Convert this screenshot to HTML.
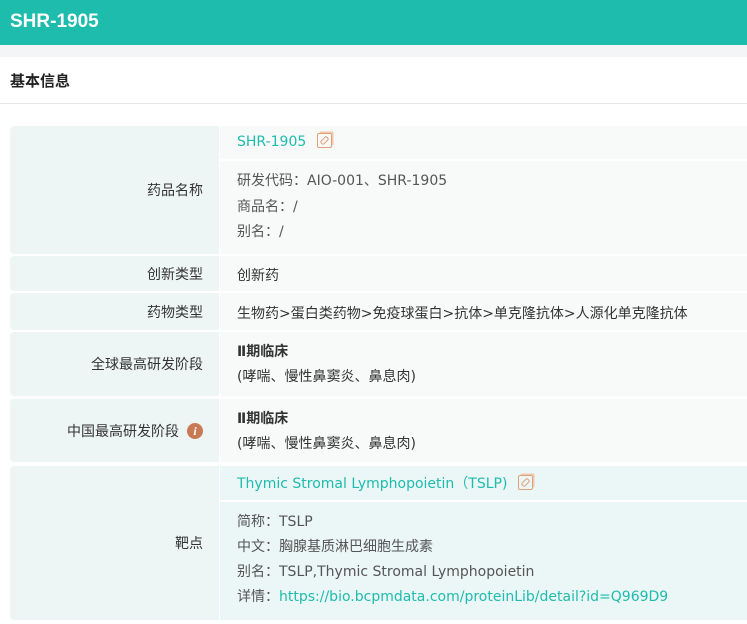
<!DOCTYPE html>
<html><head><meta charset="utf-8"><style>
*{margin:0;padding:0;box-sizing:border-box}
body{width:747px;height:624px;overflow:hidden;background:#fff;font-family:"Liberation Sans","Noto Sans CJK SC",sans-serif;font-size:14px;color:#333;position:relative}
.hdr{position:absolute;left:0;top:0;width:747px;height:45px;background:#1ebcad;color:#fff;font-weight:bold;font-size:19px;line-height:44px;padding-left:10px}
.gap{position:absolute;left:0;top:45px;width:747px;height:12px;background:#f4f5f7}
.ttl{position:absolute;left:10px;top:70px;font-weight:bold;font-size:15px;color:#222}
.line{position:absolute;left:0;top:103px;width:747px;height:1px;background:#e6e6e6}
.b{position:absolute}
.lab{background:#eef6f5;border-radius:4px 0 0 4px;left:10px;width:209px;text-align:right;padding-right:16px;display:flex;align-items:center;justify-content:flex-end;color:#333}
.con{left:220px;width:527px;background:#f8fafa;padding-left:17px}
.t{position:absolute;left:237px;white-space:nowrap;font-family:"DejaVu Sans","Noto Sans CJK SC",sans-serif;font-size:14px}
.lk{color:#1ebcad}
.ic{display:inline-block;width:15px;height:15px;border:1.5px solid #e2a07a;border-radius:2px;vertical-align:-2px;margin-left:11px;position:relative;box-shadow:2px -2px 0 -0.5px #f0c8ae}
.ic:after{content:"";position:absolute;left:2px;top:4px;width:7px;height:3px;border:1.3px solid #e2a07a;border-radius:2px;transform:rotate(-45deg)}
</style></head><body>
<div class="hdr">SHR-1905</div>
<div class="gap"></div>
<div class="ttl">基本信息</div>
<div class="line"></div>

<div class="b lab" style="top:126px;height:128px">药品名称</div>
<div class="b con" style="top:126px;height:33px"></div>
<div class="b con" style="top:161px;height:93px"></div>
<div class="t lk" style="top:133px">SHR-1905<span class="ic"></span></div>
<div class="t" style="top:170px;color:#555">研发代码：AIO-001、SHR-1905</div>
<div class="t" style="top:196px;color:#555">商品名：/</div>
<div class="t" style="top:221px;color:#555">别名：/</div>

<div class="b lab" style="top:256px;height:35px">创新类型</div>
<div class="b con" style="top:256px;height:35px"></div>
<div class="t" style="top:265px">创新药</div>

<div class="b lab" style="top:293px;height:37px">药物类型</div>
<div class="b con" style="top:293px;height:37px"></div>
<div class="t" style="top:303px">生物药&gt;蛋白类药物&gt;免疫球蛋白&gt;抗体&gt;单克隆抗体&gt;人源化单克隆抗体</div>

<div class="b lab" style="top:332px;height:64px">全球最高研发阶段</div>
<div class="b con" style="top:332px;height:64px"></div>
<div class="t" style="top:341px;font-weight:bold">Ⅱ期临床</div>
<div class="t" style="top:366px">(哮喘、慢性鼻窦炎、鼻息肉)</div>

<div class="b lab" style="top:399px;height:63px">中国最高研发阶段<span style="display:inline-block;width:16px;height:16px;border-radius:50%;background:#c97a55;color:#fff;font-size:12px;font-style:italic;font-weight:bold;text-align:center;line-height:16px;margin-left:8px;font-family:'Liberation Serif',serif">i</span></div>
<div class="b con" style="top:399px;height:63px"></div>
<div class="t" style="top:408px;font-weight:bold">Ⅱ期临床</div>
<div class="t" style="top:433px">(哮喘、慢性鼻窦炎、鼻息肉)</div>

<div class="b lab" style="top:466px;height:154px">靶点</div>
<div class="b con" style="top:466px;height:34px;background:#ebf6f6"></div>
<div class="b con" style="top:502px;height:118px;background:#ebf6f6"></div>
<div class="t lk" style="top:473px">Thymic Stromal Lymphopoietin（TSLP)<span class="ic"></span></div>
<div class="t" style="top:511px;color:#555">简称：TSLP</div>
<div class="t" style="top:536px;color:#555">中文：胸腺基质淋巴细胞生成素</div>
<div class="t" style="top:561px;color:#555">别名：TSLP,Thymic Stromal Lymphopoietin</div>
<div class="t" style="top:586px;color:#555">详情：<span class="lk">https://bio.bcpmdata.com/proteinLib/detail?id=Q969D9</span></div>
</body></html>
